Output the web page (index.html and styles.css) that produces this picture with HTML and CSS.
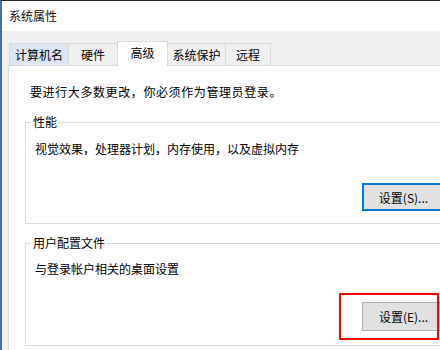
FILE: index.html
```html
<!DOCTYPE html>
<html lang="zh-CN">
<head>
<meta charset="utf-8">
<link rel="stylesheet" href="styles.css">
</head>
<body>
<div class="window">
  <div class="titlebar">系统属性</div>
  <div class="body">
    <div class="tabs">
      <div class="tab hover">计算机名</div>
      <div class="tab t-hw">硬件</div>
      <div class="tab selected">高级</div>
      <div class="tab t-sp">系统保护</div>
      <div class="tab t-rm">远程</div>
    </div>
    <div class="panel">
      <p class="intro">要进行大多数更改，你必须作为管理员登录。</p>
      <fieldset class="group g1">
        <legend>性能</legend>
        <p class="desc">视觉效果，处理器计划，内存使用，以及虚拟内存</p>
        <div class="actions"><button class="btn default">设置(S)...</button></div>
      </fieldset>
      <fieldset class="group g2">
        <legend>用户配置文件</legend>
        <p class="desc">与登录帐户相关的桌面设置</p>
        <div class="actions"><button class="btn">设置(E)...</button></div>
      </fieldset>
    </div>
  </div>
  <div class="annot"></div>
</div>
</body>
</html>
```

FILE: styles.css
```css
html, body {
  margin: 0;
  padding: 0;
  width: 440px;
  height: 350px;
  overflow: hidden;
  background: #f0f0f0;
}
.window {
  position: relative;
  width: 470px;
  height: 350px;
  border-top: 1px solid #2a2a2a;
  border-left: 2px solid #3f72ab;
  background: #f0f0f0;
  font-family: "Noto Sans CJK SC", "Microsoft YaHei", sans-serif;
  font-size: 12px;
  color: #000;
  box-sizing: border-box;
  overflow: hidden;
}
.titlebar {
  height: 30px;
  line-height: 30px;
  background: #fff;
  padding-left: 7px;
  font-size: 12px;
  color: #111;
}
.body {
  padding-left: 6px;
}
.tabs {
  display: flex;
  align-items: flex-end;
  height: 34px;
}
.tab {
  height: 22px;
  line-height: 21px;
  box-sizing: border-box;
  border: 1px solid #d9d9d9;
  border-bottom: none;
  background: #f0f0f0;
  text-align: center;
  margin-right: -1px;
}
.tab.hover {
  width: 60px;
  background: #dbe6f2;
  margin-left: 1px;
}
.t-hw { width: 50px; }
.tab.selected {
  width: 51px;
  height: 25px;
  line-height: 21px;
  background: #fff;
  position: relative;
  z-index: 1;
  margin-bottom: -1px;
  border-color: #d9d9d9;
}
.t-sp { width: 59px; }
.t-rm { width: 46px; }
.panel {
  background: #fff;
  border: 1px solid #d9d9d9;
  padding: 17px 16px 20px 16px;
  height: 300px;
}
.intro {
  margin: 0 0 13px 5px;
  line-height: 18px;
  letter-spacing: 0.6px;
}
.group {
  margin: 0;
  border: 1px solid #dcdcdc;
  padding: 0 7px 12px 9px;
  min-width: 0;
}
.group legend {
  padding: 0 2px;
  margin-left: -4px;
  line-height: 16px;
}
.desc {
  margin: 9px 0 0 0;
  line-height: 18px;
}
.g1 .desc { margin-top: 10px; }
.g2 { margin-top: 11px; padding-bottom: 14px; }
.actions {
  display: flex;
  justify-content: flex-end;
  margin-top: 25px;
}
.g2 .actions { margin-top: 24px; }
.btn {
  width: 83px;
  height: 29px;
  box-sizing: border-box;
  font-family: inherit;
  font-size: 12px;
  color: #000;
  background: #e1e1e1;
  border: 1px solid #adadad;
  padding: 0;
  margin: 0;
}
.btn.default {
  height: 28px;
  border: 2px solid #0078d7;
}
.annot {
  position: absolute;
  left: 337px;
  top: 292px;
  width: 100px;
  height: 47px;
  box-sizing: border-box;
  border: 2px solid #f00;
}
```
